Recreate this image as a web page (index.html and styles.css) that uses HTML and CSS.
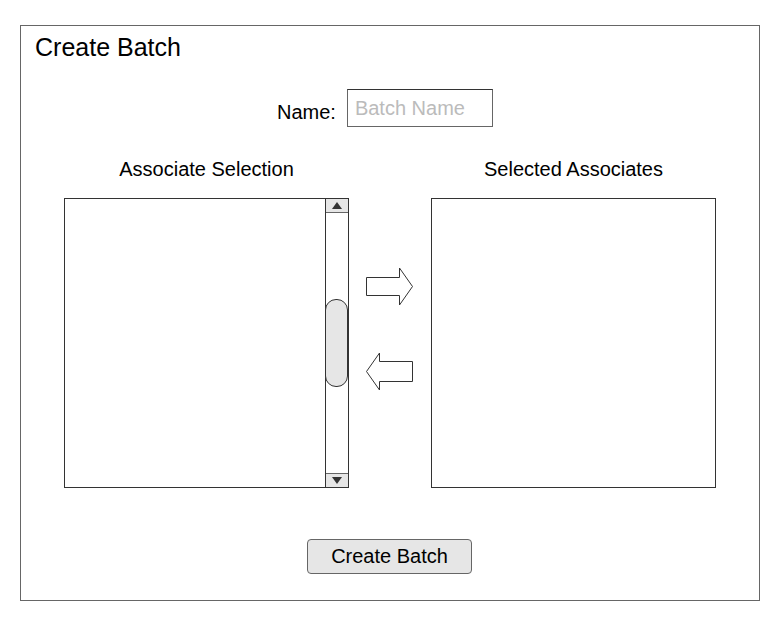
FILE: index.html
```html
<!DOCTYPE html>
<html lang="en">
<head>
  <meta charset="UTF-8" />
  <meta name="viewport" content="width=device-width, initial-scale=1.0"/>
  <title>Create Batch</title>
  <link rel="stylesheet" href="styles.css">
</head>
<body>

  <div class="frame">
    <h1 class="title">Create Batch</h1>

    <div class="name-row">
      <label for="batchName">Name:</label>
      <input id="batchName" type="text" placeholder="Batch Name" />
    </div>

    <div class="columns">
      <div class="column">
        <h2>Associate Selection</h2>
        <div class="list-box">
          <div class="list-items"></div>
          <div class="scrollbar">
            <div class="scroll-btn">
              <svg width="10" height="7" viewBox="0 0 10 7"><polygon points="5,0 10,7 0,7" fill="#333"/></svg>
            </div>
            <div class="scroll-track">
              <div class="scroll-thumb"></div>
            </div>
            <div class="scroll-btn bottom">
              <svg width="10" height="7" viewBox="0 0 10 7"><polygon points="0,0 10,0 5,7" fill="#333"/></svg>
            </div>
          </div>
        </div>
      </div>

      <div class="transfer">
        <button class="arrow-btn" title="Add">
          <svg width="48" height="40" viewBox="0 0 48 40">
            <polygon points="0.5,10.5 33.5,10.5 33.5,1 46.5,19.5 33.5,38 33.5,28.5 0.5,28.5" fill="#fff" stroke="#333" stroke-width="1"/>
          </svg>
        </button>
        <button class="arrow-btn" title="Remove">
          <svg width="48" height="40" viewBox="0 0 48 40">
            <polygon points="0.5,19.5 13.5,1 13.5,9.5 46.5,9.5 46.5,29.5 13.5,29.5 13.5,38" fill="#fff" stroke="#333" stroke-width="1"/>
          </svg>
        </button>
      </div>

      <div class="column">
        <h2>Selected Associates</h2>
        <div class="list-box"></div>
      </div>
    </div>

    <div class="actions">
      <button class="create-btn">Create Batch</button>
    </div>
  </div>

</body>
</html>
```

FILE: styles.css
```css
body {
  font-family: 'Liberation Sans', Arial, sans-serif;
  margin: 0;
  padding: 25px 0 0 20px;
  background: #fff;
  color: #000;
}

.frame {
  width: 740px;
  height: 576px;
  box-sizing: border-box;
  border: 1px solid #666;
}

.title {
  margin: 7px 0 0 14px;
  font-size: 25px;
  font-weight: normal;
  line-height: 29px;
}

/* Nama batch */
.name-row {
  display: flex;
  align-items: flex-start;
  margin-top: 27px;
  padding-left: 256px;
}

.name-row label {
  font-size: 20px;
  line-height: 23px;
  margin-top: 12px;
  margin-right: 11px;
}

.name-row input {
  width: 146px;
  height: 38px;
  box-sizing: border-box;
  border: 1px solid #666;
  border-top-color: #333;
  padding: 0 7px;
  font-family: inherit;
  font-size: 20px;
  outline: none;
}

.name-row input::placeholder {
  color: #bbb;
}

/* Kolom pilihan */
.columns {
  display: flex;
  margin-top: 31px;
  padding-left: 43px;
}

.column {
  width: 285px;
}

.column h2 {
  margin: 0 0 17px;
  font-size: 20px;
  font-weight: normal;
  line-height: 23px;
  text-align: center;
}

.list-box {
  height: 290px;
  box-sizing: border-box;
  border: 1px solid #333;
  display: flex;
  background: #fff;
}

.list-items {
  flex: 1;
}

.scrollbar {
  width: 22px;
  border-left: 1px solid #333;
  display: flex;
  flex-direction: column;
}

.scroll-btn {
  height: 13px;
  background: #e6e6e6;
  border-bottom: 1px solid #666;
  display: flex;
  align-items: center;
  justify-content: center;
}

.scroll-btn.bottom {
  border-bottom: none;
  border-top: 1px solid #666;
}

.scroll-track {
  flex: 1;
  padding-top: 86px;
}

.scroll-thumb {
  height: 88px;
  box-sizing: border-box;
  margin-left: -1px;
  border: 1px solid #333;
  border-radius: 11px;
  background: #e6e6e6;
}

/* Tombol panah */
.transfer {
  width: 82px;
  display: flex;
  flex-direction: column;
  align-items: center;
  padding-top: 109px;
  gap: 45px;
}

.arrow-btn {
  border: none;
  background: none;
  padding: 0;
  width: 48px;
  height: 40px;
  cursor: pointer;
}

.arrow-btn svg {
  display: block;
}

.actions {
  display: flex;
  margin-top: 51px;
  padding-left: 286px;
}

.create-btn {
  width: 165px;
  height: 35px;
  box-sizing: border-box;
  border: 1px solid #666;
  border-radius: 4px;
  background: #e6e6e6;
  font-family: inherit;
  font-size: 20px;
  color: #000;
  padding: 0;
  cursor: pointer;
}
```
